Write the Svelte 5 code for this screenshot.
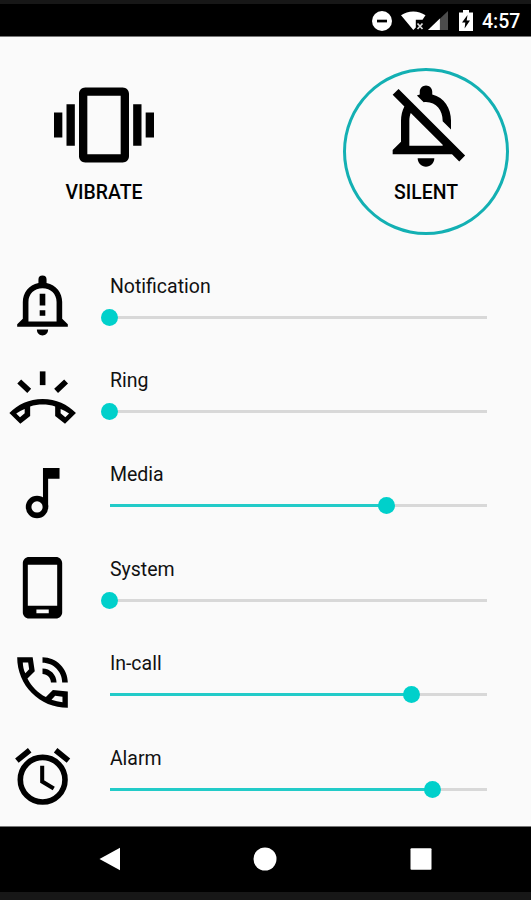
<script lang="ts">
  type Volume = {
    name: string;
    icon: string;
    level: number;
  };

  let volumes: Volume[] = $state([
    { name: "Notification", icon: "notification", level: 0 },
    { name: "Ring", icon: "ring", level: 0 },
    { name: "Media", icon: "media", level: 73.3 },
    { name: "System", icon: "system", level: 0 },
    { name: "In-call", icon: "call", level: 80 },
    { name: "Alarm", icon: "alarm", level: 85.7 },
  ]);

  let mode = $state("silent");
</script>

<div class="screen">
  <header class="status-bar">
    <svg class="dnd" viewBox="0 0 20 20">
      <circle cx="10" cy="10" r="10" fill="#fff" />
      <path d="M5 8.7h10v2.7H5z" fill="#000" />
    </svg>
    <svg class="wifi" viewBox="0 0 25 20">
      <path
        d="M0 4.3C7 -.9 17.5 -.9 24.5 4.3L21.5 8.8H14.8V16.5L12.3 19z"
        fill="#fff"
      />
      <path d="M16.5 12.5l5 5.5M21.5 12.5l-5 5.5" stroke="#ddd" stroke-width="1.7" />
    </svg>
    <svg class="signal" viewBox="0 0 21 20">
      <path d="M0 20L21 0V20z" fill="#4c4c4c" />
      <path d="M0 20L12.5 8V20z" fill="#fff" />
    </svg>
    <svg class="battery" viewBox="0 0 14 21">
      <path d="M0 2.5h4V0h6v2.5h4V21H0z" fill="#fff" />
      <path d="M8.5 5L3 12.5h3.3L5.6 18.5 11 10.5H7.7z" fill="#000" />
    </svg>
    <span class="clock">4:57</span>
  </header>

  <main>
    <div class="modes">
      <button
        class="mode"
        class:active={mode === "vibrate"}
        onclick={() => (mode = "vibrate")}
      >
        <svg viewBox="0 0 24 24">
          <path
            d="M0 15h2V9H0v6zm3 2h2V7H3v10zm19-8v6h2V9h-2zm-3 8h2V7h-2v10zM16.5 3h-9C6.67 3 6 3.67 6 4.5v15c0 .83.67 1.5 1.5 1.5h9c.83 0 1.5-.67 1.5-1.5v-15c0-.83-.67-1.5-1.5-1.5zM16 19H8V5h8v14z"
          />
        </svg>
        <span>VIBRATE</span>
      </button>
      <button
        class="mode"
        class:active={mode === "silent"}
        onclick={() => (mode = "silent")}
      >
        <svg viewBox="0 0 24 24">
          <path
            d="M12 22c1.1 0 2-.9 2-2h-4c0 1.1.9 2 2 2zm0-15.5c2.49 0 4 2.02 4 4.5v.1l2 2V11c0-3.07-1.63-5.64-4.5-6.32V4c0-.83-.67-1.5-1.5-1.5s-1.5.67-1.5 1.5v.68c-.24.06-.47.15-.69.23l1.64 1.64c.18-.02.36-.05.55-.05zM5.41 3.35L4 4.76l2.81 2.81C6.29 8.57 6 9.74 6 11v5l-2 2v1h14.24l1.74 1.74 1.41-1.41L5.41 3.35zM16 17H8v-6c0-.68.12-1.32.34-1.9L16 16.76V17z"
          />
        </svg>
        <span>SILENT</span>
      </button>
    </div>

    {#each volumes as volume (volume.name)}
      <div class="volume">
        <svg class="volume-icon" viewBox="0 0 24 24">
          {#if volume.icon === "notification"}
            <path
              fill-rule="evenodd"
              d="M10.7 4.8V3.7a1.3 1.3 0 0 1 2.6 0V4.8C16.4 5.4 18.3 7.9 18.3 10.9V16.2L20.1 18V18.8H3.9V18L5.7 16.2V10.9C5.7 7.9 7.6 5.4 10.7 4.8zM7.5 17.1H16.5V10.9C16.5 8.3 14.6 6.5 12 6.5S7.5 8.3 7.5 10.9z"
            />
            <path d="M11.1 8.2h1.8v3.8h-1.8zM11.1 13.5h1.8v1.8h-1.8zM10.2 19.7h3.6c0 1.1-.8 1.9-1.8 1.9s-1.8-.8-1.8-1.9z" />
          {:else if volume.icon === "ring"}
            <path d="M11.15 3h1.8v4.4h-1.8z" />
            <path class="line" d="M4.55 6.25l3.2 3M19.55 6.25l-3.2 3" />
            <path
              fill-rule="evenodd"
              d="M1.4 16.3C4.1 13.5 7.7 11.8 12.05 11.8S20 13.5 22.7 16.3L19.2 19.75 16.05 17.3V14.2C13.5 13.45 10.6 13.45 8.05 14.2V17.3L4.9 19.75zM3.6 16.45L4.8 17.7 6.3 16.4V15C5.3 15.4 4.5 15.8 3.6 16.45zM20.5 16.45L19.3 17.7 17.8 16.4V15C18.8 15.4 19.6 15.8 20.5 16.45z"
            />
          {:else if volume.icon === "media"}
            <path d="M12.15 3.8H17.45V7.3H13.8V16.3H12.15z" />
            <circle class="line" cx="10.25" cy="16.3" r="2.7" />
          {:else if volume.icon === "system"}
            <path
              fill-rule="evenodd"
              d="M7.7 1.95H16.3C17.4 1.95 18.3 2.8 18.3 3.9V19.65C18.3 20.7 17.4 21.6 16.3 21.6H7.7C6.6 21.6 5.7 20.7 5.7 19.65V3.9C5.7 2.8 6.6 1.95 7.7 1.95zM7.3 4.4V17.55H16.7V4.4zM10.05 18.7V19.9H14V18.7z"
            />
          {:else if volume.icon === "call"}
            <path
              transform="translate(1.2 1.2) scale(.9)"
              d="M15 12h2c0-2.76-2.24-5-5-5v2c1.66 0 3 1.34 3 3zm4 0h2c0-4.97-4.03-9-9-9v2c3.87 0 7 3.13 7 7zm2 3.2L15.7 14.65 13.2 17.15C10.37 15.71 8.1 13.4 6.65 10.57L9.25 8 8.5 3H3C3 13 11 21 21 21zM5 4.85H6.9L7.25 7.3 5.9 8.7C5.3 7.4 5.05 6.2 5 4.85zM19.1 19C17.8 18.9 16.5 18.6 15.2 18.15L16.5 16.75 19.1 17.05z"
            />
          {:else}
            <circle class="line" cx="12.05" cy="12.7" r="7.15" />
            <path class="line hands" d="M11.9 8.2V13.3L15.6 15.5" />
            <path class="line ears" d="M3.8 6.6L7.9 3.3M20.3 6.6L16.2 3.3" />
          {/if}
        </svg>
        <div class="control">
          <div class="volume-name">{volume.name}</div>
          <div class="slider">
            <div class="fill" style="width:{volume.level}%"></div>
            <div class="thumb" style="left:{volume.level}%"></div>
          </div>
        </div>
      </div>
    {/each}
  </main>

  <nav>
    <svg viewBox="0 0 24 24"><path d="M1.5 12L22 .8V23.2z" /></svg>
    <svg viewBox="0 0 24 24"><circle cx="12" cy="12" r="11.5" /></svg>
    <svg viewBox="0 0 24 24"><rect x="1.5" y="1.3" width="21" height="21.5" rx="1" /></svg>
  </nav>
</div>

<style>
  :global(body) {
    margin: 0;
  }

  .screen {
    width: 531px;
    height: 900px;
    display: flex;
    flex-direction: column;
    overflow: hidden;
    background: #fafafa;
    color: #111;
    font-family: Roboto, sans-serif;
  }

  .status-bar {
    box-sizing: border-box;
    height: 37px;
    flex: none;
    display: flex;
    align-items: center;
    justify-content: flex-end;
    padding: 1px 11px 0 0;
    border-top: 4px solid #171717;
    border-bottom: 1px solid #777;
    background: #000;
  }

  .status-bar svg {
    display: block;
    flex: none;
  }

  .dnd {
    width: 20px;
    height: 20px;
    margin-right: 9px;
  }

  .wifi {
    width: 25px;
    height: 20px;
    margin-right: 2px;
  }

  .signal {
    width: 20px;
    height: 19px;
    margin-right: 11px;
  }

  .battery {
    width: 14px;
    height: 21px;
    margin-right: 9px;
  }

  .clock {
    width: 38px;
    padding-top: 2px;
    color: #fff;
    font-size: 19.5px;
    font-weight: 500;
    line-height: 24px;
    white-space: nowrap;
  }

  main {
    flex: 1;
  }

  .modes {
    display: flex;
    justify-content: space-between;
    height: 189.9px;
    padding: 31px 22px 0 21px;
  }

  .mode {
    box-sizing: border-box;
    width: 166px;
    height: 167px;
    padding: 4px 0 0;
    display: flex;
    flex-direction: column;
    align-items: center;
    border: 3px solid transparent;
    border-radius: 50%;
    background: none;
    color: #000;
    font-family: inherit;
    font-size: 19.4px;
    font-weight: 500;
    line-height: 24px;
    cursor: pointer;
  }

  .mode.active {
    border-color: #13b0b3;
  }

  .mode svg {
    flex: none;
    width: 100px;
    height: 100px;
    margin-bottom: 6px;
  }

  .volume {
    display: flex;
    align-items: center;
    height: 94.4px;
    padding-left: 5.4px;
  }

  .volume-icon {
    flex: none;
    width: 75px;
    height: 75px;
    margin-right: 29.5px;
  }

  .line {
    fill: none;
    stroke: #000;
    stroke-width: 1.8;
  }

  .hands {
    stroke-width: 1.3;
  }

  .ears {
    stroke-width: 1.8;
  }

  .control {
    width: 377px;
  }

  .volume-name {
    padding-top: 1px;
    font-size: 19.5px;
    line-height: 24px;
    margin-bottom: 17px;
  }

  .slider {
    position: relative;
    height: 3px;
    margin-bottom: 18px;
    background: #d8d8d8;
  }

  .fill {
    height: 100%;
    background: #22cbc8;
  }

  .thumb {
    position: absolute;
    top: -7px;
    width: 17px;
    height: 17px;
    margin-left: -8.5px;
    border-radius: 50%;
    background: #00d0cb;
  }

  nav {
    box-sizing: border-box;
    height: 74px;
    flex: none;
    display: flex;
    align-items: center;
    justify-content: space-between;
    padding: 0 98.5px 0 97.5px;
    border-top: 1px solid #777;
    border-bottom: 8px solid #171717;
    background: #000;
  }

  nav svg {
    width: 24px;
    height: 24px;
    margin-bottom: 1px;
    fill: #fff;
  }
</style>
